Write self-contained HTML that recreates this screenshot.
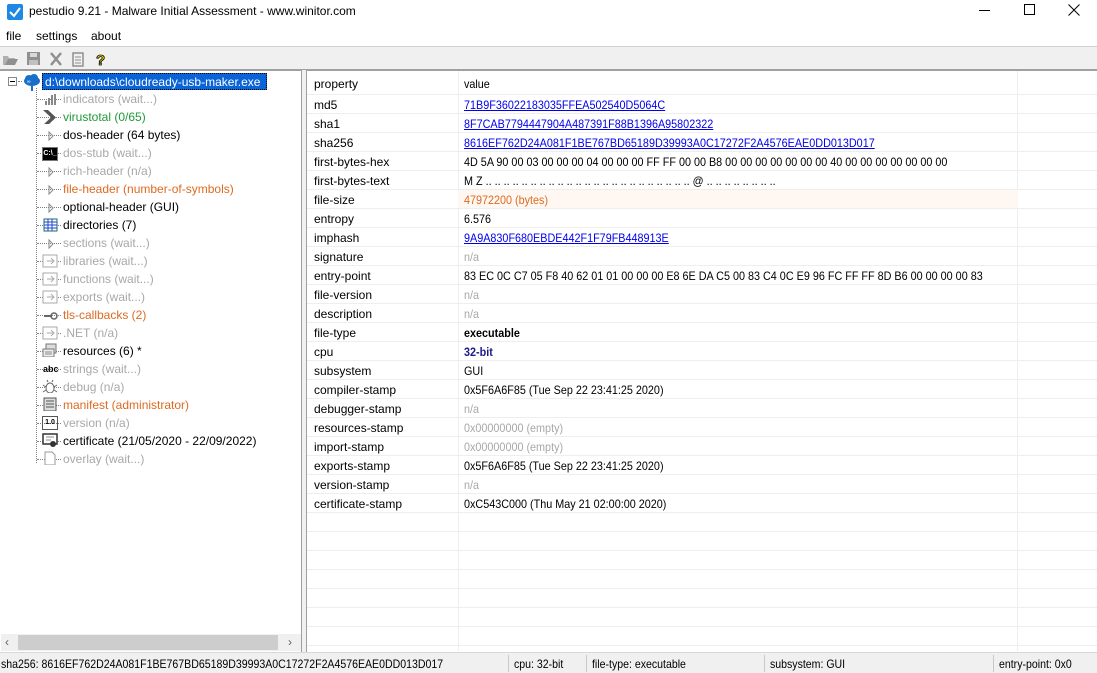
<!DOCTYPE html>
<html><head><meta charset="utf-8"><style>
*{margin:0;padding:0;box-sizing:border-box}
body{width:1097px;height:673px;overflow:hidden;background:#fff;font-family:"Liberation Sans",Arial,sans-serif;font-size:12px;color:#000;position:relative}
.abs{position:absolute}
#title{left:0;top:0;width:1097px;height:24px;background:#fff}
#menu{left:0;top:24px;height:22px;width:1097px;background:#fff}
#menu span{position:absolute;top:5px;font-size:12px}
#tb{left:0;top:46px;width:1097px;height:24px;background:#f0f0f0;border-top:1px solid #d0d0d0;border-bottom:1px solid #a0a0a0}
#left{left:0;top:70px;width:302px;height:582px;background:#fff;border-right:1px solid #a0a0a0;border-top:1px solid #a0a0a0}
#split{left:302px;top:70px;width:5px;height:582px;background:#f0f0f0}
#right{left:306px;top:70px;width:791px;height:582px;background:#fff;border-left:1px solid #a0a0a0;border-top:1px solid #a0a0a0}
.ti{position:absolute;left:63px;font-size:12px;white-space:nowrap;line-height:14px}
.g{color:#a8a8a8}.o{color:#dd6a1f}.gr{color:#1e9a3a}
.dh{position:absolute;left:37px;width:24px;border-top:1px dotted #808080}
.ic{position:absolute;left:42px;width:16px;height:14px}
.row{position:absolute;left:307px;width:790px;height:19px;border-bottom:1px solid #eeeeee}
.row .p{position:absolute;left:7px;top:3px}
.row .v{position:absolute;left:157px;top:3px;white-space:nowrap;transform:scaleX(.9);transform-origin:left}
a{color:#0000ee;text-decoration:underline}
#status{left:0;top:652px;width:1097px;height:21px;background:#f0f0f0;border-top:1px solid #d8d8d8;font-size:12px}
#status span{position:absolute;top:4px;white-space:nowrap;transform:scaleX(.88);transform-origin:left}
.sep{position:absolute;top:2px;width:1px;height:17px;background:#c8c8c8}
</style></head><body>
<div id="title" class="abs">
 <div class="abs" style="left:7px;top:4px;width:16px;height:16px;background:#1e88e5;border-radius:2px"><svg width="16" height="16"><path d="M3 8 L7 12 L13 4" stroke="#fff" stroke-width="2" fill="none"/></svg></div>
 <div class="abs" style="left:29px;top:4px;font-size:12px">pestudio 9.21 - Malware Initial Assessment - www.winitor.com</div>
 <div class="abs" style="left:979px;top:10px;width:11px;height:1px;background:#000"></div>
 <div class="abs" style="left:1024px;top:4px;width:11px;height:11px;border:1px solid #000"></div>
 <svg class="abs" style="left:1068px;top:4px" width="12" height="12"><path d="M0.5 0.5 L11.5 11.5 M11.5 0.5 L0.5 11.5" stroke="#000" stroke-width="1"/></svg>
</div>
<div id="menu" class="abs"><span style="left:6px">file</span><span style="left:36px">settings</span><span style="left:91px">about</span></div>
<div id="tb" class="abs">
 <svg class="abs" style="left:2px;top:4px" width="110" height="16">
  <path d="M1 5h5l1 2h6v7H1z" fill="#b0b0b0"/><path d="M3 14l3-6h10l-3 6z" fill="#909090"/>
  <rect x="25" y="1" width="13" height="13" fill="#909090"/><rect x="28" y="2" width="7" height="4" fill="#d8d8d8"/><rect x="27" y="9" width="9" height="5" fill="#c0c0c0"/>
  <path d="M49 2l10 12M59 2l-10 12" stroke="#909090" stroke-width="2.5"/>
  <rect x="71" y="2" width="10" height="13" fill="none" stroke="#909090" stroke-width="1.5"/><path d="M73 6h6M73 9h6M73 12h6" stroke="#909090"/>
  <text x="94" y="14" font-size="15" font-weight="bold" fill="#f2e000" stroke="#000" stroke-width=".8" font-family="Liberation Sans">?</text>
 </svg>
</div>
<div id="left" class="abs"></div>
<div id="split" class="abs"></div>
<div id="right" class="abs"></div>

<div class="abs" style="left:8px;top:77px;width:9px;height:9px;border:1px solid #888;background:#fff"></div>
<div class="abs" style="left:10px;top:81px;width:5px;height:1px;background:#000"></div>
<div class="abs" style="left:18px;top:81px;width:4px;border-top:1px dotted #808080"></div>
<svg class="abs" style="left:22px;top:73px" width="20" height="20"><ellipse cx="10" cy="8" rx="8" ry="5" fill="#1a6fc9"/><circle cx="7" cy="6" r="4" fill="#1a6fc9"/><circle cx="12" cy="5" r="4" fill="#1a6fc9"/><path d="M10 12v6" stroke="#1a6fc9" stroke-width="2"/><text x="5" y="10" font-size="5" fill="#fff">∞</text></svg>
<div class="abs" style="left:36px;top:88px;height:375px;border-left:1px dotted #808080"></div>
<div class="abs" style="left:42px;top:73px;width:225px;height:17px;background:#0a64d8;border:1px dotted #000;color:#fff;padding:1px 1px 0 2px;font-size:12px;white-space:nowrap">d:\downloads\cloudready-usb-maker.exe</div>

<div class="dh" style="top:99px"></div><div class="ti g" style="top:92px">indicators (wait...)</div>
<svg class="ic" style="top:93px" width="16" height="14"><rect x="9" y="2" width="2" height="10" fill="#888"/><rect x="6" y="5" width="2" height="7" fill="#888"/><rect x="12" y="1" width="2" height="11" fill="#888"/><rect x="3" y="8" width="2" height="4" fill="#888"/></svg>
<div class="dh" style="top:117px"></div><div class="ti gr" style="top:110px">virustotal (0/65)</div>
<svg class="ic" style="top:110px" width="16" height="15"><path d="M1 0h5l8 7.5-8 7.5H1l8-7.5z" fill="#555"/></svg>
<div class="dh" style="top:135px"></div><div class="ti" style="top:128px">dos-header (64 bytes)</div>
<svg class="ic" style="top:129px" width="16" height="14"><path d="M7 3l4 4-4 4z" fill="none" stroke="#888"/></svg>
<div class="dh" style="top:153px"></div><div class="ti g" style="top:146px">dos-stub (wait...)</div>
<div class="ic" style="top:147px;background:#000;border:1px solid #777;color:#fff;font-size:7px;font-weight:bold;line-height:11px;text-align:center">C:\_</div>
<div class="dh" style="top:171px"></div><div class="ti g" style="top:164px">rich-header (n/a)</div>
<svg class="ic" style="top:165px" width="16" height="14"><path d="M7 3l4 4-4 4z" fill="none" stroke="#888"/></svg>
<div class="dh" style="top:189px"></div><div class="ti o" style="top:182px">file-header (number-of-symbols)</div>
<svg class="ic" style="top:183px" width="16" height="14"><path d="M7 3l4 4-4 4z" fill="none" stroke="#888"/></svg>
<div class="dh" style="top:207px"></div><div class="ti" style="top:200px">optional-header (GUI)</div>
<svg class="ic" style="top:201px" width="16" height="14"><path d="M7 3l4 4-4 4z" fill="none" stroke="#888"/></svg>
<div class="dh" style="top:225px"></div><div class="ti" style="top:218px">directories (7)</div>
<svg class="ic" style="top:218px" width="16" height="14"><rect x="2" y="1" width="13" height="12" fill="#fff" stroke="#1c6a6a"/><path d="M2 4h13M2 7h13M2 10h13M6 1v12M10 1v12" stroke="#2244cc"/></svg>
<div class="dh" style="top:243px"></div><div class="ti g" style="top:236px">sections (wait...)</div>
<svg class="ic" style="top:237px" width="16" height="14"><path d="M7 3l4 4-4 4z" fill="none" stroke="#888"/></svg>
<div class="dh" style="top:261px"></div><div class="ti g" style="top:254px">libraries (wait...)</div>
<svg class="ic" style="top:254px" width="16" height="14"><rect x="1" y="1" width="14" height="12" fill="#fff" stroke="#aaa"/><path d="M5 7h7M9 4l3 3-3 3" stroke="#aaa" fill="none"/></svg>
<div class="dh" style="top:279px"></div><div class="ti g" style="top:272px">functions (wait...)</div>
<svg class="ic" style="top:272px" width="16" height="14"><rect x="1" y="1" width="14" height="12" fill="#fff" stroke="#aaa"/><path d="M5 7h7M9 4l3 3-3 3" stroke="#aaa" fill="none"/></svg>
<div class="dh" style="top:297px"></div><div class="ti g" style="top:290px">exports (wait...)</div>
<svg class="ic" style="top:290px" width="16" height="14"><rect x="1" y="1" width="14" height="12" fill="#fff" stroke="#aaa"/><path d="M5 7h7M9 4l3 3-3 3" stroke="#aaa" fill="none"/></svg>
<div class="dh" style="top:315px"></div><div class="ti o" style="top:308px">tls-callbacks (2)</div>
<svg class="ic" style="top:308px" width="16" height="14"><path d="M2 8h8" stroke="#666" stroke-width="2"/><circle cx="12" cy="8" r="3" fill="none" stroke="#666" stroke-width="1.5"/></svg>
<div class="dh" style="top:333px"></div><div class="ti g" style="top:326px">.NET (n/a)</div>
<svg class="ic" style="top:326px" width="16" height="14"><rect x="1" y="1" width="14" height="12" fill="#fff" stroke="#aaa"/><path d="M5 7h7M9 4l3 3-3 3" stroke="#aaa" fill="none"/></svg>
<div class="dh" style="top:351px"></div><div class="ti" style="top:344px">resources (6) *</div>
<svg class="ic" style="top:343px" width="16" height="15"><rect x="4" y="1" width="10" height="9" fill="#ddd" stroke="#777"/><rect x="1" y="6" width="11" height="8" fill="#eee" stroke="#777"/><path d="M3 9h7M3 11h7" stroke="#888"/></svg>
<div class="dh" style="top:369px"></div><div class="ti g" style="top:362px">strings (wait...)</div>
<div class="ic" style="top:363px;font-size:9px;font-weight:bold;line-height:12px;left:43px;color:#000">abc</div>
<div class="dh" style="top:387px"></div><div class="ti g" style="top:380px">debug (n/a)</div>
<svg class="ic" style="top:379px" width="16" height="15"><ellipse cx="8" cy="9" rx="4" ry="5" fill="#fff" stroke="#666"/><path d="M1 6l3 2M15 6l-3 2M1 13l3-2M15 13l-3-2M6 3l-1-2M10 3l1-2" stroke="#666"/></svg>
<div class="dh" style="top:405px"></div><div class="ti o" style="top:398px">manifest (administrator)</div>
<svg class="ic" style="top:397px" width="16" height="15"><rect x="2" y="1" width="12" height="13" fill="#ddd" stroke="#555"/><path d="M4 4h8M4 7h8M4 10h8" stroke="#555"/></svg>
<div class="dh" style="top:423px"></div><div class="ti g" style="top:416px">version (n/a)</div>
<div class="ic" style="top:416px;border:1px solid #555;font-size:7px;font-weight:bold;line-height:12px;text-align:center">1.0</div>
<div class="dh" style="top:441px"></div><div class="ti" style="top:434px">certificate (21/05/2020 - 22/09/2022)</div>
<svg class="ic" style="top:433px" width="16" height="15"><rect x="1" y="1" width="14" height="10" fill="#fff" stroke="#333" stroke-width="1.5"/><path d="M4 4h8M4 7h5" stroke="#888"/><circle cx="11" cy="11" r="3" fill="#333"/></svg>
<div class="dh" style="top:459px"></div><div class="ti g" style="top:452px">overlay (wait...)</div>
<svg class="ic" style="top:451px" width="16" height="15"><path d="M3 1h7l3 3v10H3z" fill="#fff" stroke="#999"/></svg>

<div class="abs" style="left:1px;top:634px;width:300px;height:17px;background:#f0f0f0"></div>
<div class="abs" style="left:18px;top:635px;width:260px;height:15px;background:#cdcdcd"></div>
<div class="abs" style="left:5px;top:635px;color:#606060;font-size:12px">‹</div>
<div class="abs" style="left:288px;top:635px;color:#606060;font-size:12px">›</div>

<div class="abs" style="left:458px;top:71px;width:1px;height:580px;background:#eeeeee"></div>
<div class="abs" style="left:1017px;top:71px;width:1px;height:580px;background:#eeeeee"></div>
<div class="row" style="top:71px;height:24px;border-bottom:1px solid #eee"><span class="p" style="top:6px">property</span><span class="v" style="top:6px">value</span></div>
<div class="row" style="top:95px"><span class="p">md5</span><span class="v"><a>71B9F36022183035FFEA502540D5064C</a></span></div>
<div class="row" style="top:114px"><span class="p">sha1</span><span class="v"><a>8F7CAB7794447904A487391F88B1396A95802322</a></span></div>
<div class="row" style="top:133px"><span class="p">sha256</span><span class="v"><a>8616EF762D24A081F1BE767BD65189D39993A0C17272F2A4576EAE0DD013D017</a></span></div>
<div class="row" style="top:152px"><span class="p">first-bytes-hex</span><span class="v">4D 5A 90 00 03 00 00 00 04 00 00 00 FF FF 00 00 B8 00 00 00 00 00 00 00 40 00 00 00 00 00 00 00</span></div>
<div class="row" style="top:171px"><span class="p">first-bytes-text</span><span class="v">M Z .. .. .. .. .. .. .. .. .. .. .. .. .. .. .. .. .. .. .. .. .. .. .. @ .. .. .. .. .. .. .. ..</span></div>
<div class="row" style="top:190px;background:linear-gradient(to right,#fff 151px,#fff8f2 151px,#fff8f2 711px,#fff 711px)"><span class="p">file-size</span><span class="v o">47972200 (bytes)</span></div>
<div class="row" style="top:209px"><span class="p">entropy</span><span class="v">6.576</span></div>
<div class="row" style="top:228px"><span class="p">imphash</span><span class="v"><a>9A9A830F680EBDE442F1F79FB448913E</a></span></div>
<div class="row" style="top:247px"><span class="p">signature</span><span class="v g">n/a</span></div>
<div class="row" style="top:266px"><span class="p">entry-point</span><span class="v">83 EC 0C C7 05 F8 40 62 01 01 00 00 00 E8 6E DA C5 00 83 C4 0C E9 96 FC FF FF 8D B6 00 00 00 00 83</span></div>
<div class="row" style="top:285px"><span class="p">file-version</span><span class="v g">n/a</span></div>
<div class="row" style="top:304px"><span class="p">description</span><span class="v g">n/a</span></div>
<div class="row" style="top:323px"><span class="p">file-type</span><span class="v" style="font-weight:bold">executable</span></div>
<div class="row" style="top:342px"><span class="p">cpu</span><span class="v" style="font-weight:bold;color:#1a1a8a">32-bit</span></div>
<div class="row" style="top:361px"><span class="p">subsystem</span><span class="v">GUI</span></div>
<div class="row" style="top:380px"><span class="p">compiler-stamp</span><span class="v">0x5F6A6F85 (Tue Sep 22 23:41:25 2020)</span></div>
<div class="row" style="top:399px"><span class="p">debugger-stamp</span><span class="v g">n/a</span></div>
<div class="row" style="top:418px"><span class="p">resources-stamp</span><span class="v g">0x00000000 (empty)</span></div>
<div class="row" style="top:437px"><span class="p">import-stamp</span><span class="v g">0x00000000 (empty)</span></div>
<div class="row" style="top:456px"><span class="p">exports-stamp</span><span class="v">0x5F6A6F85 (Tue Sep 22 23:41:25 2020)</span></div>
<div class="row" style="top:475px"><span class="p">version-stamp</span><span class="v g">n/a</span></div>
<div class="row" style="top:494px"><span class="p">certificate-stamp</span><span class="v">0xC543C000 (Thu May 21 02:00:00 2020)</span></div>
<div class="row" style="top:513px"></div><div class="row" style="top:532px"></div><div class="row" style="top:551px"></div><div class="row" style="top:570px"></div><div class="row" style="top:589px"></div><div class="row" style="top:608px"></div><div class="row" style="top:627px"></div>

<div id="status" class="abs">
 <span style="left:1px">sha256: 8616EF762D24A081F1BE767BD65189D39993A0C17272F2A4576EAE0DD013D017</span>
 <div class="sep" style="left:508px"></div><span style="left:514px">cpu: 32-bit</span>
 <div class="sep" style="left:586px"></div><span style="left:592px">file-type: executable</span>
 <div class="sep" style="left:764px"></div><span style="left:770px">subsystem: GUI</span>
 <div class="sep" style="left:993px"></div><span style="left:999px">entry-point: 0x0</span>
</div>
</body></html>
